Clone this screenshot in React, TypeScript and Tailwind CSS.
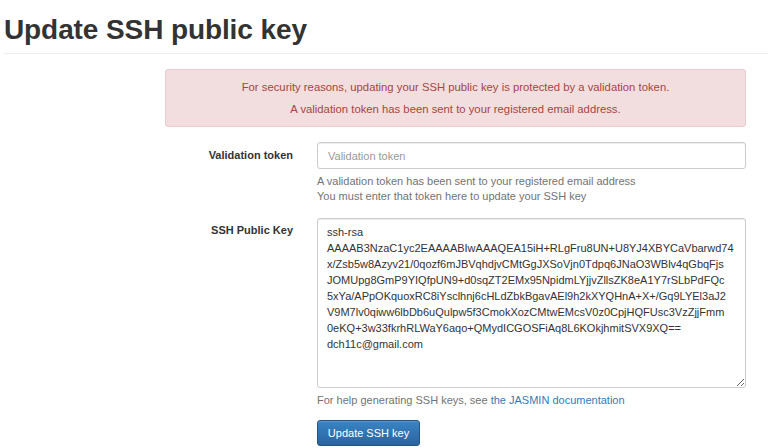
const keyLines = [
  "ssh-rsa",
  "AAAAB3NzaC1yc2EAAAABIwAAAQEA15iH+RLgFru8UN+U8YJ4XBYCaVbarwd74",
  "x/Zsb5w8Azyv21/0qozf6mJBVqhdjvCMtGgJXSoVjn0Tdpq6JNaO3WBlv4qGbqFjs",
  "JOMUpg8GmP9YIQfpUN9+d0sqZT2EMx95NpidmLYjjvZllsZK8eA1Y7rSLbPdFQc",
  "5xYa/APpOKquoxRC8iYsclhnj6cHLdZbkBgavAEl9h2kXYQHnA+X+/Gq9LYEl3aJ2",
  "V9M7lv0qiww6lbDb6uQulpw5f3CmokXozCMtwEMcsV0z0CpjHQFUsc3VzZjjFmm",
  "0eKQ+3w33fkrhRLWaY6aqo+QMydICGOSFiAq8L6KOkjhmitSVX9XQ==",
  "dch11c@gmail.com",
]

export default function App() {
  return (
    <div className="min-h-[448px] bg-white font-['Liberation_Sans',Arial,sans-serif] text-[11px] leading-[15px] text-[#333]">
      <div className="ml-[4px] border-b border-[#eee] pt-[14px] pb-[7px]">
        <h1 className="text-[28px] leading-[32px] font-bold tracking-[-0.1px] text-[#333]">
          Update SSH public key
        </h1>
      </div>

      <div className="ml-[165px] mt-[15px] w-[581px] rounded-[3px] border border-[#ebccd1] bg-[#f2dede] pt-[10px] pb-[9px] text-center text-[11.3px] text-[#a94442]">
        <p>For security reasons, updating your SSH public key is protected by a validation token.</p>
        <p className="mt-[7px]">A validation token has been sent to your registered email address.</p>
      </div>

      <form className="mt-[15px]">
        <div className="flex">
          <label className="w-[317px] pr-[24px] pt-[6px] text-right font-bold">Validation token</label>
          <div className="w-[429px]">
            <input
              type="text"
              placeholder="Validation token"
              className="block h-[27px] w-full rounded-[3px] border border-[#ccc] px-[10px] text-[11px] text-[#555] placeholder:text-[#999] shadow-[inset_0_1px_1px_rgba(0,0,0,0.075)] outline-none"
            />
            <p className="mt-[5px] text-[#737373]">
              A validation token has been sent to your registered email address
              <br />
              You must enter that token here to update your SSH key
            </p>
          </div>
        </div>

        <div className="mt-[14px] flex">
          <label className="w-[317px] pr-[24px] pt-[5px] text-right font-bold">SSH Public Key</label>
          <div className="w-[429px]">
            <textarea
              defaultValue={keyLines.join("\n")}
              className="block h-[170px] w-full resize-y rounded-[3px] border border-[#ccc] px-[9px] py-[5px] text-[11px] leading-[16px] text-[#333] shadow-[inset_0_1px_1px_rgba(0,0,0,0.075)] outline-none whitespace-pre"
            />
            <p className="mt-[5px] text-[#737373]">
              For help generating SSH keys, see{" "}
              <a href="#" className="text-[#337ab7]">the JASMIN documentation</a>
            </p>
            <button
              type="button"
              className="mt-[12px] h-[26px] w-[103px] rounded-[3px] border border-[#245580] bg-gradient-to-b from-[#3a84c4] to-[#2a64a0] text-[11px] text-white shadow-[inset_0_1px_0_rgba(255,255,255,0.15)]"
            >
              Update SSH key
            </button>
          </div>
        </div>
      </form>
    </div>
  )
}
